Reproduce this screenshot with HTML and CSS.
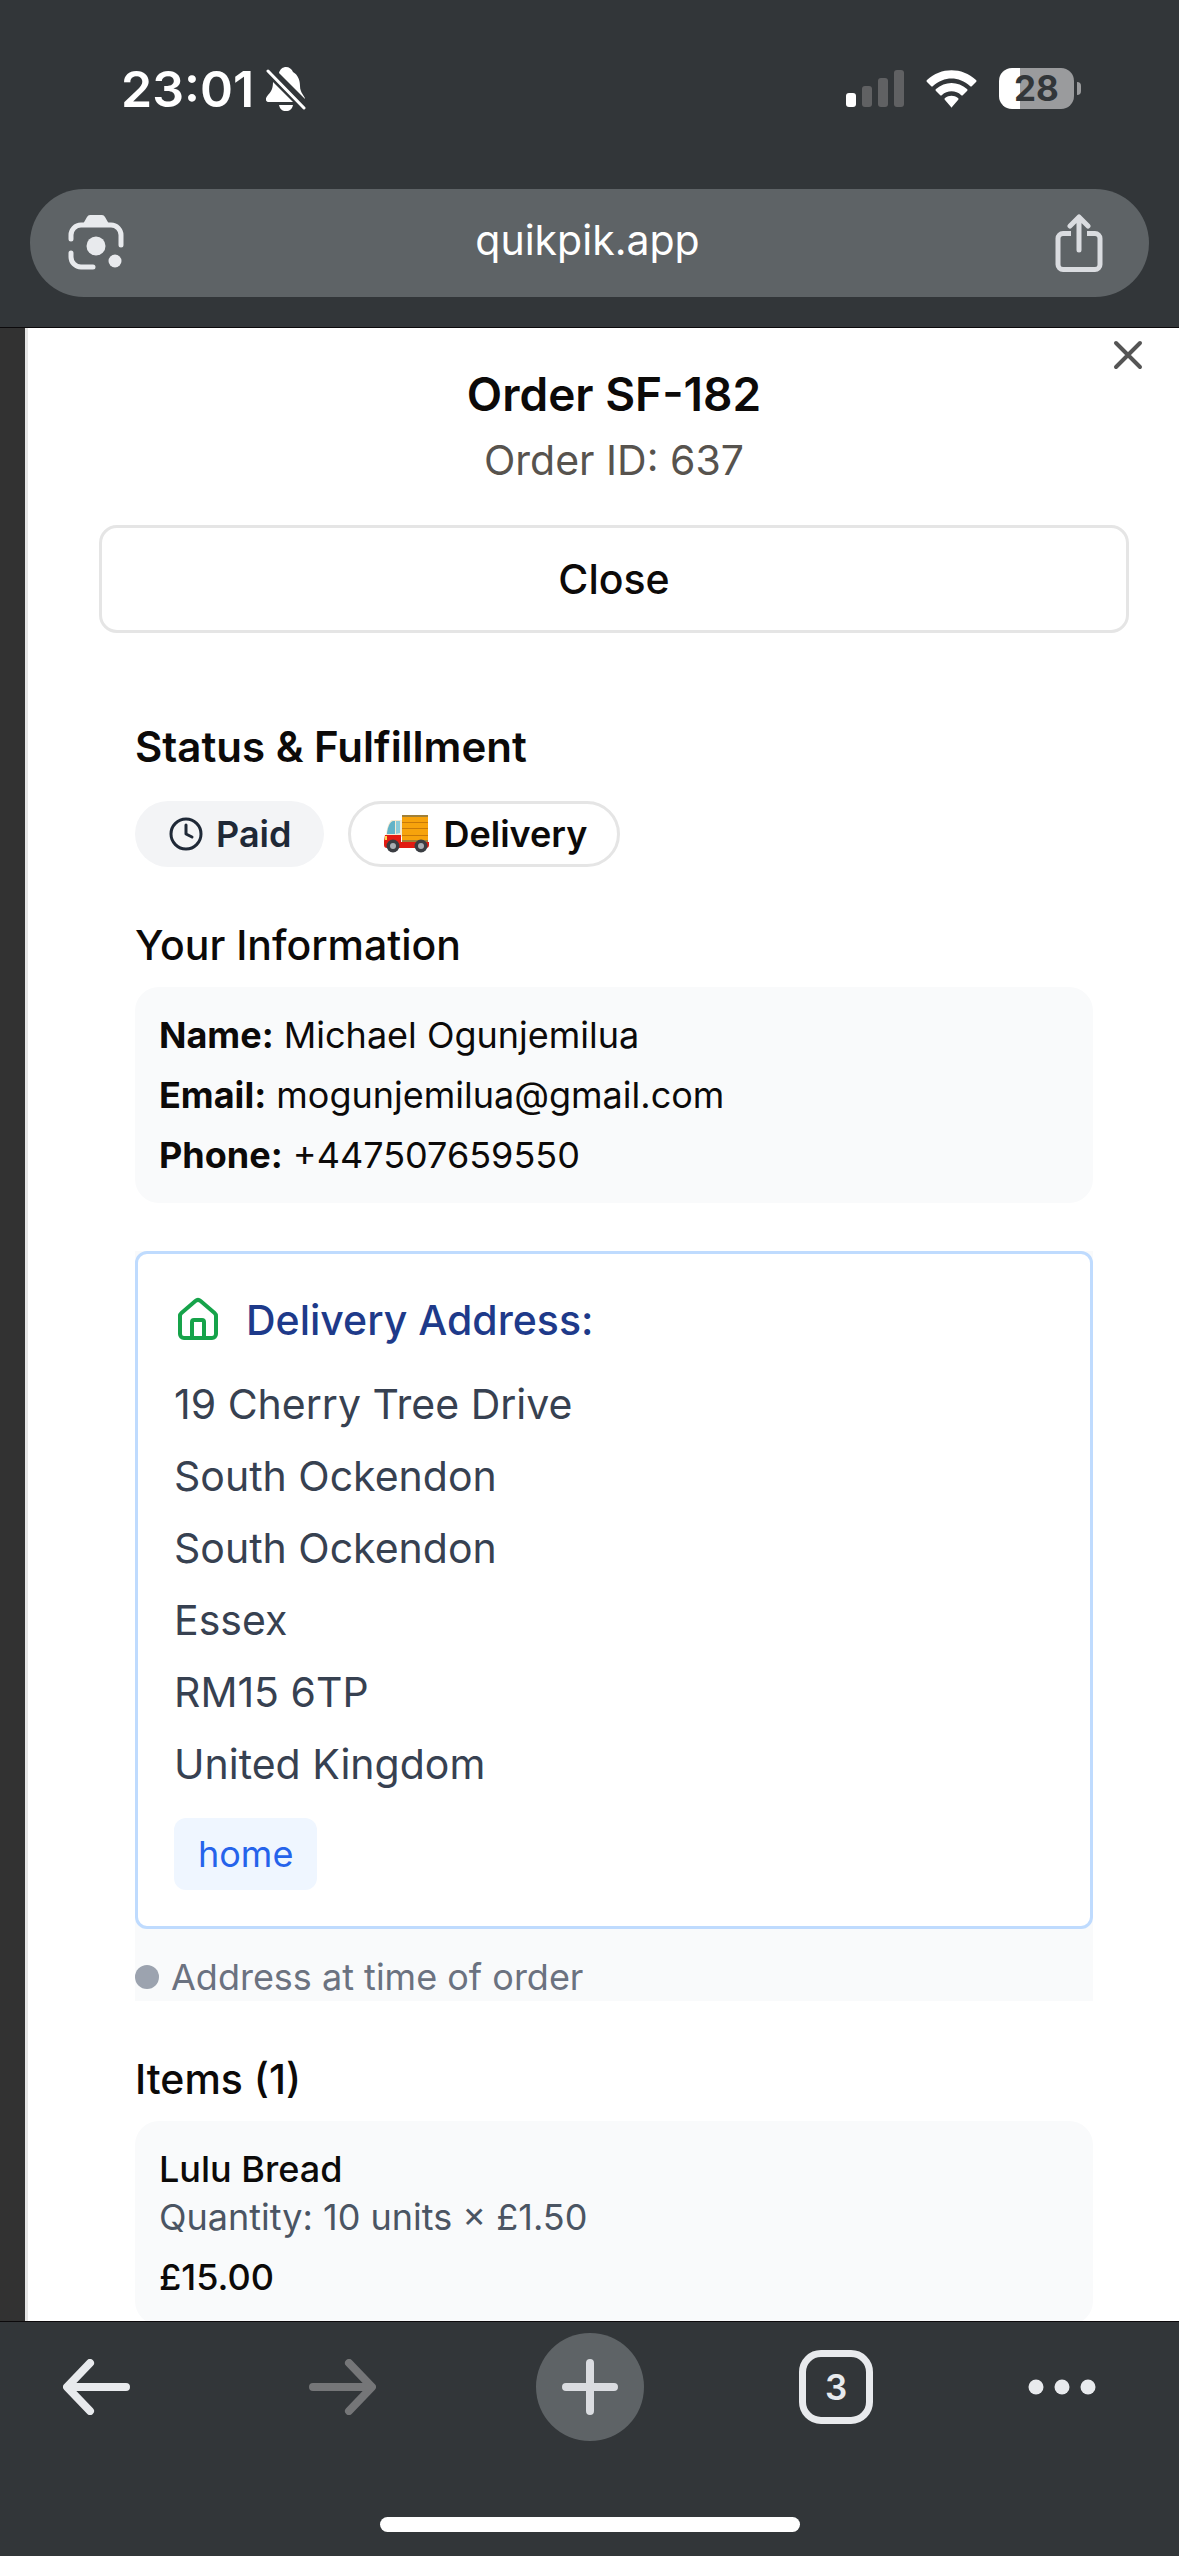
FILE: index.html
```html
<!DOCTYPE html>
<html lang="en">
<head>
<meta charset="utf-8">
<meta name="viewport" content="width=device-width, initial-scale=1">
<title>Order SF-182</title>
<link rel="stylesheet" href="styles.css">
</head>
<body>
<header class="browser-top">
  <div class="status-bar">
    <div class="status-left">
      <span class="clock">23:01</span>
      <svg class="bell" viewBox="0 0 40 44" role="img" aria-label="Silent">
        <path fill="#fff" d="M13 6C14 2 17 0 20 0s6 2 7 5c5 3 7 8 7 14 0 7 5 10 5 13L13 6zM7 15l20 20H3c-4 0-4-4-1-7 4-4 5-8 5-13zM13 38h14c-1 4-3 6-7 6s-6-2-7-6z"/>
        <path fill="none" stroke="#fff" stroke-width="3" stroke-linecap="round" d="M2 4l36 37"/>
      </svg>
    </div>
    <div class="status-right">
      <svg class="signal" viewBox="0 0 58 38" role="img" aria-label="Signal">
        <rect x="0" y="23" width="10" height="14" rx="3" fill="#fff"/>
        <rect x="16" y="16" width="10" height="21" rx="3" fill="#606163"/>
        <rect x="32" y="8" width="10" height="29" rx="3" fill="#606163"/>
        <rect x="48" y="0" width="10" height="37" rx="3" fill="#606163"/>
      </svg>
      <svg class="wifi" viewBox="0 0 51 38" role="img" aria-label="Wi-Fi">
        <path fill="#fff" d="M1 10C15-3 36-3 50 10q1 1 0 2l-4 4q-1 1-2 0C33 6 18 6 7 16q-1 1-2 0l-4-4q-1-1 0-2zM10 19c9-8 22-8 31 0q1 1 0 2l-4 4q-1 1-2 0c-5-5-14-5-19 0q-1 1-2 0l-4-4q-1-1 0-2zM19 28c4-3 9-3 13 0q1 1 0 2l-6 7q-1 1-1 0l-6-7q-1-1 0-2z"/>
      </svg>
      <div class="battery"><span class="battery-level">28</span></div>
    </div>
  </div>
  <div class="address-bar">
    <button class="icon-button" aria-label="Search with camera">
      <svg class="lens" viewBox="0 0 56 56">
        <g fill="none" stroke="#e8eaed" stroke-width="5" stroke-linecap="round"><path d="M3 24v-4a10 10 0 0 1 10-10h30a10 10 0 0 1 10 10v10M3 38v4a10 10 0 0 0 10 10h12"/></g>
        <path fill="#e8eaed" d="M15 9l4-7q1-2 3-2h12q2 0 3 2l4 7z"/>
        <circle cx="28" cy="31" r="9.500" fill="#e8eaed"/><circle cx="47" cy="46" r="6.500" fill="#e8eaed"/>
      </svg>
    </button>
    <a class="site" href="#">quikpik.app</a>
    <button class="icon-button" aria-label="Share">
      <svg class="share" viewBox="0 0 48 58" fill="none" stroke="#dadce0" stroke-width="5" stroke-linecap="round" stroke-linejoin="round">
        <path stroke-linecap="butt" d="M16 19.500H8a5 5 0 0 0-5 5v26a5 5 0 0 0 5 5h32a5 5 0 0 0 5-5v-26a5 5 0 0 0-5-5h-8"/>
        <path d="M24 36V3M15 12l9-9 9 9"/>
      </svg>
    </button>
  </div>
</header>

<main class="page">
  <div class="dialog" role="dialog" aria-labelledby="order-title">
    <button class="dismiss" aria-label="Dismiss">
      <svg viewBox="0 0 24 24" fill="none" stroke="#555" stroke-width="2" stroke-linecap="round"><path d="M18 6L6 18M6 6l12 12"/></svg>
    </button>
    <div class="dialog-head">
      <h1 class="title" id="order-title">Order SF-182</h1>
      <p class="subtitle">Order ID: 637</p>
      <button class="close-button">Close</button>
    </div>
    <div class="dialog-body">
      <section>
        <h2 class="heading strong">Status &amp; Fulfillment</h2>
        <div class="badges">
          <span class="badge paid">
            <svg class="badge-icon" viewBox="0 0 24 24" fill="none" stroke="currentColor" stroke-width="2" stroke-linecap="round" stroke-linejoin="round"><circle cx="12" cy="12" r="10"/><path d="M12 6v6l4 2"/></svg>
            Paid
          </span>
          <span class="badge delivery">
            <svg class="truck" viewBox="-3 -2 50 42">
              <path fill="#f3e9d2" d="M2 20C3 12 5 6 8 5h11v17H2z"/>
              <path fill="#62b3c7" d="M3 18C4 11 6 7 9 6h2v13H3z"/>
              <path fill="#8acbd8" d="M12 6h4v12l-4 1z"/>
              <path fill="#e21b12" d="M1 20h16v7h28v3q0 3-3 3H3q-3 0-3-3v-4z"/>
              <path fill="#f7a30c" d="M18 1h26v26H18z"/>
              <path fill="none" stroke="#c97a08" d="M18 7.500h26M18 13.500h26M18 20.500h26"/>
              <path fill="#a08038" d="M18 0h26v2H18zM18 25h26v2H18z"/>
              <path fill="#ffd84a" d="M1 21h2v4H1z"/>
              <circle cx="9" cy="31" r="6.500" fill="#3a3d42"/><circle cx="9" cy="31" r="3" fill="#a9adb3"/>
              <circle cx="37" cy="31" r="6.500" fill="#3a3d42"/><circle cx="37" cy="31" r="3" fill="#a9adb3"/>
            </svg>
            Delivery
          </span>
        </div>
      </section>

      <section class="section">
        <h2 class="heading">Your Information</h2>
        <dl class="panel details">
          <div><dt>Name:</dt> <dd>Michael Ogunjemilua</dd></div>
          <div><dt>Email:</dt> <dd>mogunjemilua@gmail.com</dd></div>
          <div><dt>Phone:</dt> <dd>+447507659550</dd></div>
        </dl>
      </section>

      <section class="section shipping">
        <div class="address-card">
          <h2 class="heading address-title">
            <svg class="home" viewBox="0 0 24 24" fill="none" stroke="#16a34a" stroke-width="2" stroke-linecap="round" stroke-linejoin="round"><path d="M15 21v-8a1 1 0 0 0-1-1h-4a1 1 0 0 0-1 1v8"/><path d="M3 10a2 2 0 0 1 .709-1.528l7-5.999a2 2 0 0 1 2.582 0l7 5.999A2 2 0 0 1 21 10v9a2 2 0 0 1-2 2H5a2 2 0 0 1-2-2z"/></svg>
            Delivery Address:
          </h2>
          <address class="lines">
            <span>19 Cherry Tree Drive</span>
            <span>South Ockendon</span>
            <span>South Ockendon</span>
            <span>Essex</span>
            <span>RM15 6TP</span>
            <span>United Kingdom</span>
          </address>
          <span class="tag">home</span>
        </div>
        <p class="note"><span class="dot"></span>Address at time of order</p>
      </section>

      <section class="section">
        <h2 class="heading">Items (1)</h2>
        <div class="panel item">
          <h3 class="item-name">Lulu Bread</h3>
          <p class="item-quantity">Quantity: 10 units × £1.50</p>
          <p class="item-price">£15.00</p>
        </div>
      </section>
    </div>
  </div>
</main>

<footer class="browser-bottom">
  <nav class="toolbar" aria-label="Browser">
    <button class="tool" aria-label="Back">
      <svg class="arrow" viewBox="0 0 67 56" fill="none" stroke="#e8eaed" stroke-width="8" stroke-linecap="round" stroke-linejoin="round"><path d="M63 28H5M27 4L4 28l23 24"/></svg>
    </button>
    <button class="tool" aria-label="Forward" disabled>
      <svg class="arrow" viewBox="0 0 67 56" fill="none" stroke="#757678" stroke-width="8" stroke-linecap="round" stroke-linejoin="round"><path d="M4 28h58M40 4l23 24-23 24"/></svg>
    </button>
    <button class="tool new-tab" aria-label="New tab">
      <svg class="plus" viewBox="0 0 56 56" fill="none" stroke="#dadce0" stroke-width="8" stroke-linecap="round"><path d="M28 4v48M4 28h48"/></svg>
    </button>
    <button class="tool" aria-label="Tabs"><span class="tab-count">3</span></button>
    <button class="tool more" aria-label="More">
      <svg class="dots" viewBox="0 0 68 16" fill="#e8eaed"><circle cx="8" cy="8" r="7.500"/><circle cx="34" cy="8" r="7.500"/><circle cx="60" cy="8" r="7.500"/></svg>
    </button>
  </nav>
  <div class="home-indicator"></div>
</footer>
</body>
</html>
```
FILE: styles.css
```css
*, *::before, *::after { box-sizing: border-box; }

body {
  margin: 0;
  height: 100vh;
  display: flex;
  flex-direction: column;
  font-family: Inter, "Liberation Sans", sans-serif;
  font-size: 36px;
  line-height: 48px;
  color: #0c0a09;
  background: #323639;
}

h1, h2, h3, p, dl, dd { margin: 0; }

button {
  padding: 0;
  border: 0;
  background: none;
  color: inherit;
  font: inherit;
}

svg { display: block; flex: none; }

/* Browser chrome, top */
.browser-top {
  flex: none;
  padding: 0 30px 30px;
  border-bottom: 1px solid #0c0a0c;
}

.status-bar {
  display: flex;
  justify-content: space-between;
  align-items: center;
  height: 177px;
  margin-bottom: 12px;
  padding: 0 75px 0 91px;
}

.status-left { display: flex; align-items: center; gap: 12px; }
.clock { color: #fff; font-size: 50px; font-weight: 600; }
.bell { width: 40px; height: 44px; }

.status-right { display: flex; align-items: center; gap: 22px; }
.signal { width: 58px; height: 38px; }
.wifi { width: 51px; height: 38px; }

.battery {
  position: relative;
  width: 75px;
  height: 41px;
  border-radius: 13px;
  background: linear-gradient(to right, #fff 21px, #9a9b9d 21px);
}
.battery::after {
  content: "";
  position: absolute;
  left: 78px;
  top: 14px;
  width: 4px;
  height: 13px;
  border-radius: 0 4px 4px 0;
  background: #9a9b9d;
}
.battery-level {
  display: block;
  text-align: center;
  color: #323639;
  font-size: 35px;
  font-weight: 700;
  line-height: 41px;
}

.address-bar {
  display: flex;
  justify-content: space-between;
  align-items: center;
  height: 108px;
  padding: 0 40px 0 36px;
  border-radius: 54px;
  background: #5e6366;
}
.icon-button { display: flex; justify-content: center; width: 60px; }
.lens { width: 56px; height: 56px; }
.share { width: 48px; height: 58px; }
.site {
  padding-bottom: 6px;
  color: #fff;
  font-size: 41px;
  text-decoration: none;
}

/* Page behind and the order dialog */
.page {
  flex: 1;
  min-height: 0;
  display: flex;
  padding-left: 25px;
  overflow: hidden;
  background: #323232;
}
.dialog {
  position: relative;
  flex: 1;
  padding: 36px 50px 0 71px;
  border-left: 3px solid #e5e5e5;
  background: #fff;
}
.dismiss { position: absolute; top: 3px; right: 27px; }
.dismiss svg { width: 48px; height: 48px; }

.dialog-head { text-align: center; }
.title { font-size: 46px; font-weight: 600; line-height: 60px; }
.subtitle { margin-top: 6px; color: #57534e; font-size: 41px; line-height: 60px; }
.close-button {
  width: 100%;
  height: 108px;
  margin-top: 35px;
  border: 3px solid #e5e5e5;
  border-radius: 18px;
  font-size: 41px;
  font-weight: 500;
}

.dialog-body { padding: 84px 36px 0; }
.section { margin-top: 48px; }
.heading { font-size: 41px; font-weight: 500; line-height: 60px; }
.heading.strong { font-size: 42px; font-weight: 600; }

.badges { display: flex; gap: 24px; margin-top: 24px; }
.badge {
  display: flex;
  align-items: center;
  height: 66px;
  padding: 0 30px;
  border: 3px solid transparent;
  border-radius: 33px;
  font-weight: 600;
  gap: 12px;
}
.paid { background: #f3f4f6; color: #1f2937; }
.delivery { border-color: #e5e5e5; }
.badge-icon { width: 36px; height: 36px; }
.truck { width: 50px; height: 42px; }

.panel {
  margin-top: 12px;
  padding: 24px;
  border-radius: 24px;
  background: #f9fafb;
}
.details { display: grid; gap: 12px; }
.details dt, .details dd { display: inline; }
.details dt { font-weight: 700; }

.shipping { background: #f9fafb; }
.address-card {
  padding: 36px;
  border: 3px solid #bfdbfe;
  border-radius: 12px;
  background: #fff;
}
.address-title { display: flex; align-items: center; gap: 24px; color: #1e3a8a; }
.home { width: 48px; height: 48px; }
.lines {
  display: grid;
  gap: 12px;
  margin: 24px 0;
  color: #374151;
  font-size: 41px;
  font-style: normal;
  line-height: 60px;
}
.tag {
  display: inline-block;
  padding: 12px 24px;
  border-radius: 12px;
  background: #eff6ff;
  color: #2563eb;
  vertical-align: top;
}
.note {
  display: flex;
  align-items: center;
  gap: 12px;
  padding-top: 24px;
  color: #6b7280;
}
.dot { width: 24px; height: 24px; border-radius: 50%; background: #9ca3af; }

.item-name { font-size: 36px; font-weight: 500; }
.item-quantity { color: #4b5563; }
.item-price { margin-top: 12px; font-weight: 500; }

/* Browser chrome, bottom */
.browser-bottom { flex: none; padding-bottom: 24px; border-top: 1px solid #0c0a0c; }
.toolbar {
  display: flex;
  justify-content: space-between;
  align-items: center;
  padding: 11px 84px 0 42px;
}
.tool { display: flex; justify-content: center; align-items: center; width: 108px; height: 108px; }
.new-tab { border-radius: 50%; background: #5e6366; }
.more { width: 66px; }
.arrow { width: 67px; height: 56px; }
.plus { width: 56px; height: 56px; }
.dots { width: 68px; height: 16px; }
.tab-count {
  width: 74px;
  height: 74px;
  border: 7px solid #e8eaed;
  border-radius: 22px;
  color: #e8eaed;
  font-size: 35px;
  font-weight: 600;
  line-height: 60px;
}
.home-indicator {
  width: 420px;
  height: 15px;
  margin: 76px auto 0;
  border-radius: 8px;
  background: #fff;
}
```
